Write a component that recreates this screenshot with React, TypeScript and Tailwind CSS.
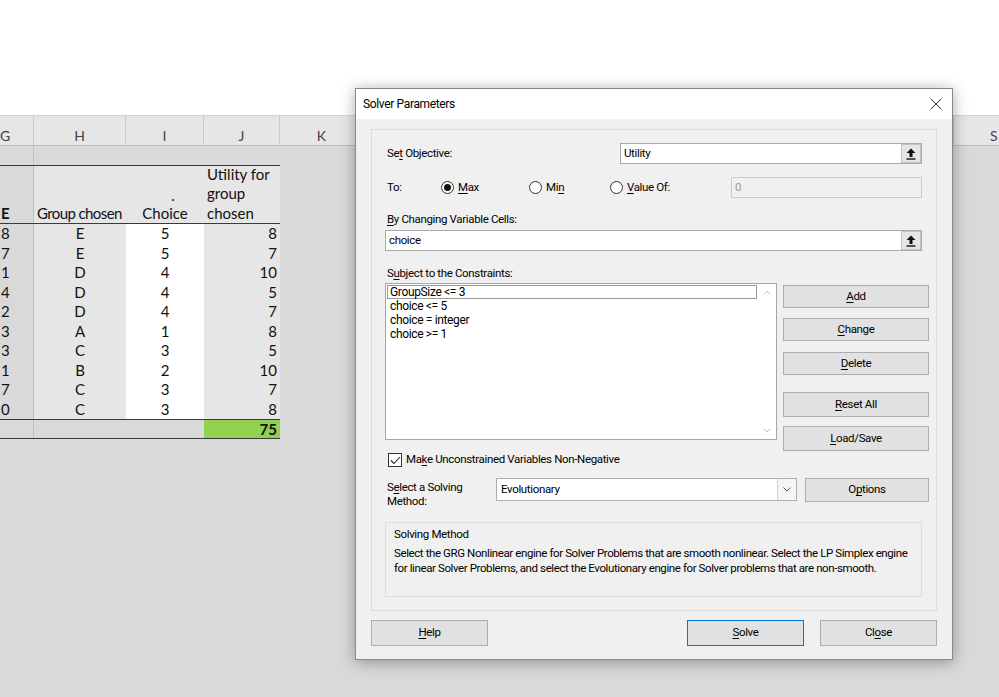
import React from 'react';

const rows = [
  { g: '8', h: 'E', i: '5', j: '8' },
  { g: '7', h: 'E', i: '5', j: '7' },
  { g: '1', h: 'D', i: '4', j: '10' },
  { g: '4', h: 'D', i: '4', j: '5' },
  { g: '2', h: 'D', i: '4', j: '7' },
  { g: '3', h: 'A', i: '1', j: '8' },
  { g: '3', h: 'C', i: '3', j: '5' },
  { g: '1', h: 'B', i: '2', j: '10' },
  { g: '7', h: 'C', i: '3', j: '7' },
  { g: '0', h: 'C', i: '3', j: '8' },
];

const constraints = ['GroupSize <= 3', 'choice <= 5', 'choice = integer', 'choice >= 1'];

const RefArrow = () => (
  <svg width="10" height="12" viewBox="0 0 10 12">
    <path d="M5 0.5 L9.5 5 L6.5 5 L6.5 9 L3.5 9 L3.5 5 L0.5 5 Z" fill="#111" />
    <rect x="0.5" y="10.3" width="9" height="1.4" fill="#111" />
  </svg>
);

const RefInput: React.FC<{ value: string; className: string }> = ({ value, className }) => (
  <div className={`flex h-[21px] border border-[#a9a9a9] bg-white ${className}`}>
    <div className="flex-1 pl-[3px] leading-[19px]">{value}</div>
    <div className="flex w-[20px] items-center justify-center border border-[#c4c4c4] bg-[#e6e6e6]">
      <RefArrow />
    </div>
  </div>
);

const Radio: React.FC<{ checked?: boolean; children: React.ReactNode; className: string }> = ({ checked, children, className }) => (
  <div className={`flex items-center gap-[4px] ${className}`}>
    <div className="flex h-[13px] w-[13px] items-center justify-center rounded-full border border-[#333] bg-white">
      {checked && <div className="h-[7px] w-[7px] rounded-full bg-[#111]" />}
    </div>
    <span>{children}</span>
  </div>
);

const Btn: React.FC<{ children: React.ReactNode; className: string; focused?: boolean }> = ({ children, className, focused }) => (
  <div
    className={`flex shrink-0 items-center justify-center border bg-[#e1e1e1] ${
      focused ? 'border-[#0078d7]' : 'border-[#adadad]'
    } ${className}`}
  >
    <span>{children}</span>
  </div>
);

const Chevron: React.FC<{ up?: boolean; color: string }> = ({ up, color }) => (
  <svg width="8" height="5" viewBox="0 0 8 5">
    <path d={up ? 'M0.5 4.5 L4 1 L7.5 4.5' : 'M0.5 0.5 L4 4 L7.5 0.5'} fill="none" stroke={color} strokeWidth="1" />
  </svg>
);

function Sheet() {
  return (
    <div className="flex flex-col font-['Lato',sans-serif] text-[15px] text-[#111]">
      {/* column letters */}
      <div className="flex h-[31px] border-t border-b border-t-[#d4d4d4] border-b-[#bdbdbd] bg-[#e6e6e6] text-[14px] text-[#444]">
        <div className="flex w-[34px] items-center border-r border-[#cacaca] pt-[10px]">G</div>
        <div className="flex w-[92px] items-center justify-center border-r border-[#cacaca] pt-[10px]">H</div>
        <div className="flex w-[78px] items-center justify-center border-r border-[#cacaca] pt-[10px]">I</div>
        <div className="flex w-[76px] items-center justify-center border-r border-[#cacaca] pt-[10px]">J</div>
        <div className="flex w-[84px] items-center justify-center border-r border-[#cacaca] pt-[10px]">K</div>
        <div className="flex-1" />
        <div className="flex w-[46px] items-center border-l border-[#cacaca] pl-[36px] pt-[10px]">S</div>
      </div>

      <div className="flex w-[280px] flex-col">
        <div className="flex h-[19px]">
          <div className="w-[34px] border-r border-[#c2c2c2]" />
        </div>
        <div className="h-[1px] bg-[#3a3a3a]" />
        <div className="flex h-[57px] items-end leading-[19.5px]">
          <div className="flex h-full w-[34px] items-end border-r border-[#c2c2c2] pl-[1px] font-bold">E</div>
          <div className="flex h-full w-[92px] items-end whitespace-nowrap bg-[#e6e6e6] pl-[3px] tracking-[-0.6px]">Group chosen</div>
          <div className="flex h-full w-[78px] flex-col items-center justify-end bg-[#e6e6e6]">
            <span className="pl-[16px] leading-[17px]">.</span>
            <span>Choice</span>
          </div>
          <div className="flex h-full w-[76px] flex-col justify-end bg-[#e6e6e6] pl-[3px]">
            <span>Utility for</span>
            <span>group</span>
            <span>chosen</span>
          </div>
        </div>
        <div className="h-[1px] bg-[#3a3a3a]" />
        {rows.map((r, k) => (
          <div key={k} className="flex h-[19.5px] items-center leading-[19.5px]">
            <div className="h-full w-[34px] border-r border-[#c2c2c2] pl-[1px]">{r.g}</div>
            <div className="h-full w-[92px] bg-[#e6e6e6] text-center">{r.h}</div>
            <div className="h-full w-[78px] bg-white text-center">{r.i}</div>
            <div className="h-full w-[76px] bg-[#e6e6e6] pr-[3px] text-right">{r.j}</div>
          </div>
        ))}
        <div className="h-[1px] bg-[#3a3a3a]" />
        <div className="flex h-[18px] leading-[18px]">
          <div className="h-full w-[34px] border-r border-[#c2c2c2]" />
          <div className="h-full w-[170px]" />
          <div className="h-full w-[76px] bg-[#92d050] pr-[3px] text-right font-bold">75</div>
        </div>
        <div className="h-[1px] bg-[#3a3a3a]" />
      </div>
    </div>
  );
}

function SolverDialog() {
  return (
    <div className="absolute left-[355px] top-[88px] flex h-[572px] w-[598px] flex-col border border-[#8a8a8a] bg-[#f0f0f0] font-['Roboto',sans-serif] text-[11.5px] tracking-[-0.35px] text-black shadow-[0_2px_14px_rgba(0,0,0,0.35)]">
      <div className="flex h-[30px] items-center justify-between bg-white pl-[7px] pr-[10px] text-[12px]">
        <span>Solver Parameters</span>
        <svg width="12" height="12" viewBox="0 0 12 12">
          <path d="M0.5 0.5 L11.5 11.5 M11.5 0.5 L0.5 11.5" stroke="#333" strokeWidth="1" />
        </svg>
      </div>

      <div className="mx-[15px] mt-[10px] flex h-[482px] flex-col border border-[#dcdcdc] pl-[13px]">
        {/* objective */}
        <div className="mt-[13px] flex h-[21px] items-center">
          <span className="ml-[2px] w-[233px]">
            Se<u className="underline-offset-2">t</u> Objective:
          </span>
          <RefInput value="Utility" className="w-[302px]" />
        </div>

        {/* to */}
        <div className="mt-[13px] flex h-[21px] items-center">
          <span className="ml-[2px] w-[54px]">To:</span>
          <Radio checked className="w-[88px]">
            <u className="underline-offset-2">M</u>ax
          </Radio>
          <Radio className="w-[81px]">
            Mi<u className="underline-offset-2">n</u>
          </Radio>
          <Radio className="w-[121px]">
            <u className="underline-offset-2">V</u>alue Of:
          </Radio>
          <div className="h-[21px] w-[191px] border border-[#cccccc] bg-[#f0f0f0] pl-[3px] leading-[19px] text-[#9a9a9a]">0</div>
        </div>

        {/* changing cells */}
        <div className="ml-[2px] mt-[14px] h-[14px] leading-[14px]">
          <u className="underline-offset-2">B</u>y Changing Variable Cells:
        </div>
        <RefInput value="choice" className="mt-[4px] w-[537px]" />

        {/* constraints */}
        <div className="ml-[2px] mt-[15px] h-[14px] leading-[14px]">
          S<u className="underline-offset-2">u</u>bject to the Constraints:
        </div>
        <div className="mt-[3px] flex h-[157px] items-start">
          <div className="flex h-[157px] w-[392px] border border-[#a6a6a6] bg-white">
            <div className="flex flex-1 flex-col pl-[1px] pt-[1px] text-[12px] leading-[14px]">
              {constraints.map((c, k) => (
                <div key={k} className={`h-[14px] pl-[2px] leading-[12px] ${k === 0 ? 'border border-[#9a9a9a]' : 'border border-transparent'}`}>
                  {c}
                </div>
              ))}
            </div>
            <div className="flex w-[19px] flex-col items-center justify-between py-[6px]">
              <Chevron up color="#c0c0c0" />
              <Chevron color="#c0c0c0" />
            </div>
          </div>
          <div className="ml-[6px] flex w-[146px] flex-col">
            <Btn className="mt-[2px] h-[23px]">
              <u className="underline-offset-2">A</u>dd
            </Btn>
            <Btn className="mt-[10px] h-[23px]">
              <u className="underline-offset-2">C</u>hange
            </Btn>
            <Btn className="mt-[11px] h-[23px]">
              <u className="underline-offset-2">D</u>elete
            </Btn>
            <Btn className="mt-[17px] h-[25px]">
              <u className="underline-offset-2">R</u>eset All
            </Btn>
            <Btn className="mt-[9px] h-[25px]">
              <u className="underline-offset-2">L</u>oad/Save
            </Btn>
          </div>
        </div>

        {/* checkbox */}
        <div className="mt-[13px] flex h-[14px] items-center">
          <div className="ml-[3px] flex h-[14px] w-[14px] items-center justify-center border border-[#333] bg-white">
            <svg width="11" height="9" viewBox="0 0 11 9">
              <path d="M1 4.5 L4 7.5 L10 1" fill="none" stroke="#222" strokeWidth="1.1" />
            </svg>
          </div>
          <span className="ml-[4px]">
            Ma<u className="underline-offset-2">k</u>e Unconstrained Variables Non-Negative
          </span>
        </div>

        {/* method */}
        <div className="mt-[11px] flex items-start">
          <div className="ml-[2px] mt-[2px] w-[109px] leading-[14px]">
            S<u className="underline-offset-2">e</u>lect a Solving
            <br />
            Method:
          </div>
          <div className="flex h-[23px] w-[301px] border border-[#adadad] bg-white">
            <div className="flex-1 pl-[4px] leading-[21px]">Evolutionary</div>
            <div className="flex w-[19px] items-center justify-center border-l border-[#d0d0d0] bg-[#f5f5f5]">
              <Chevron color="#555" />
            </div>
          </div>
          <Btn className="ml-[8px] h-[24px] w-[124px]">
            O<u className="underline-offset-2">p</u>tions
          </Btn>
        </div>

        <div className="mt-[14px] h-[75px] w-[537px] border border-[#dcdcdc] pl-[8px] pt-[4px]">
          <div className="leading-[15px]">Solving Method</div>
          <div className="mt-[4px] whitespace-nowrap leading-[15px] tracking-[-0.4px]">
            Select the GRG Nonlinear engine for Solver Problems that are smooth nonlinear. Select the LP Simplex engine
            <br />
            for linear Solver Problems, and select the Evolutionary engine for Solver problems that are non-smooth.
          </div>
        </div>
      </div>

      <div className="mx-[15px] mt-[9px] flex">
        <Btn className="h-[26px] w-[117px]">
          <u className="underline-offset-2">H</u>elp
        </Btn>
        <div className="flex-1" />
        <Btn focused className="h-[26px] w-[117px]">
          <u className="underline-offset-2">S</u>olve
        </Btn>
        <Btn className="ml-[16px] h-[26px] w-[117px]">
          Cl<u className="underline-offset-2">o</u>se
        </Btn>
      </div>
    </div>
  );
}

export default function App() {
  return (
    <div className="relative h-[697px] w-[999px] overflow-hidden bg-[#d9d9d9]">
      <div className="h-[115px] bg-white" />
      <Sheet />
      <SolverDialog />
    </div>
  );
}
